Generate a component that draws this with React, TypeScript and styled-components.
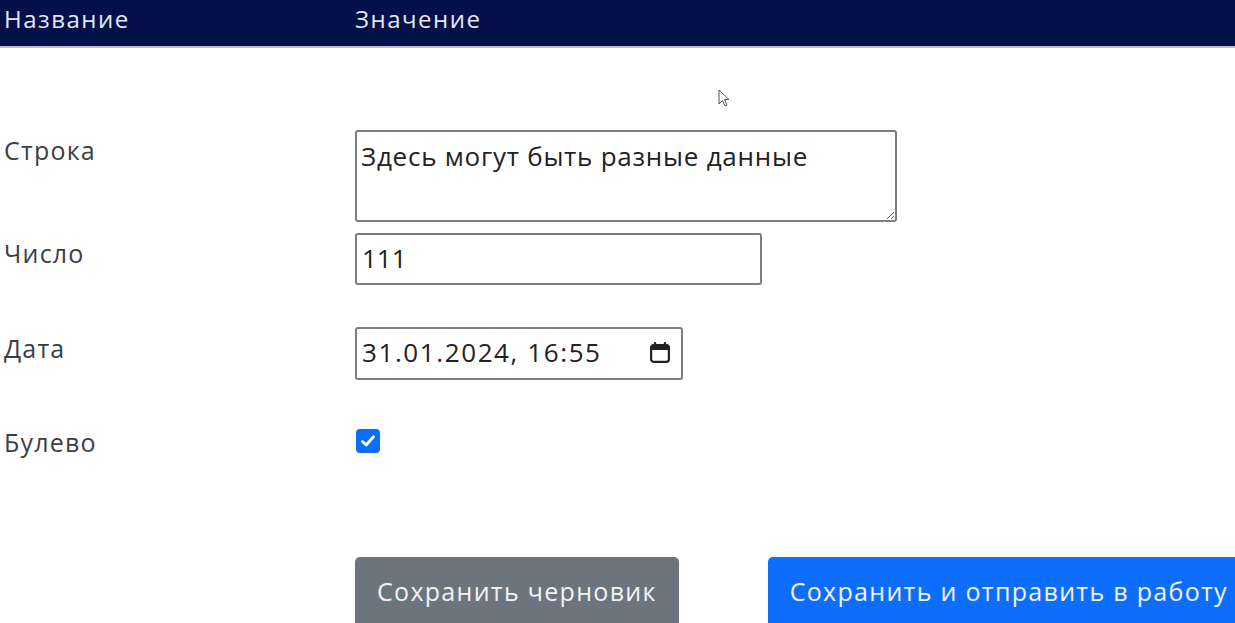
import React from "react";
import styled, { createGlobalStyle } from "styled-components";

const Global = createGlobalStyle`
  html, body { margin: 0; padding: 0; background: #ffffff; }
  body { font-family: "Open Sans", "Noto Sans", sans-serif; color: #212529; overflow: hidden; }
`;

const Page = styled.div`
  width: 1235px;
  height: 623px;
  overflow: hidden;
  position: relative;
`;

const Header = styled.div`
  display: grid;
  grid-template-columns: 355px 1fr;
  height: 48px;
  align-items: center;
  background: #03104a;
  border-bottom: 2px solid #b8bccb;
  box-sizing: border-box;
  color: #e3e7f2;
  font-size: 24px;
  letter-spacing: 1.5px;
  padding-bottom: 9px;
`;

const HeaderCell = styled.div<{ $pl?: number }>`
  padding-left: ${(p) => p.$pl ?? 0}px;
`;

const Row = styled.div<{ $mt: number; $lt: number }>`
  display: grid;
  grid-template-columns: 355px 1fr;
  align-items: start;
  margin-top: ${(p) => p.$mt}px;
  & > label {
    padding-top: ${(p) => p.$lt}px;
  }
`;

const Label = styled.label`
  font-size: 25px;
  line-height: 28px;
  letter-spacing: 1.2px;
  color: #3b3f45;
  padding-left: 4px;
`;

const TextArea = styled.textarea`
  width: 542px;
  height: 92px;
  box-sizing: border-box;
  border: 2px solid #7d7d7d;
  border-radius: 3px;
  padding: 6px 4px;
  font-family: "Open Sans", "Noto Sans", sans-serif;
  font-size: 26px;
  line-height: 36px;
  letter-spacing: 0.75px;
  color: #222;
  resize: vertical;
  display: block;
`;

const Input = styled.input<{ $w: number }>`
  width: ${(p) => p.$w}px;
  height: 52px;
  box-sizing: border-box;
  border: 2px solid #7d7d7d;
  border-radius: 3px;
  padding: 0 5px 2px;
  font-family: "Open Sans", "Noto Sans", sans-serif;
  font-size: 26px;
  color: #222;
  display: block;
`;

const DateBox = styled.div`
  width: 328px;
  height: 53px;
  box-sizing: border-box;
  border: 2px solid #7d7d7d;
  border-radius: 3px;
  padding: 0 10px 3px 5px;
  display: flex;
  align-items: center;
  justify-content: space-between;
  font-size: 26px;
  letter-spacing: 1.6px;
  color: #222;
`;

const Check = styled.span`
  display: inline-flex;
  align-items: center;
  justify-content: center;
  width: 24px;
  height: 24px;
  margin-left: 1px;
  margin-top: 2px;
  border-radius: 4px;
  background: #0b6ef6;
`;

const Buttons = styled.div`
  display: flex;
  gap: 89px;
  padding-left: 355px;
  margin-top: 101px;
`;

const Button = styled.button<{ $variant: "secondary" | "primary" }>`
  height: 70px;
  padding: 0 22px 2px;
  border: none;
  border-radius: 5px;
  font-family: "Open Sans", "Noto Sans", sans-serif;
  font-size: 25px;
  letter-spacing: 1.3px;
  color: #f1f3f5;
  white-space: nowrap;
  background: ${(p) => (p.$variant === "primary" ? "#0d6efd" : "#6c757d")};
`;

const Cursor = styled.svg`
  position: absolute;
  left: 718px;
  top: 89px;
`;

export default function App() {
  return (
    <Page>
      <Global />
      <Header>
        <HeaderCell $pl={4}>Название</HeaderCell>
        <HeaderCell>Значение</HeaderCell>
      </Header>
      <Row $mt={82} $lt={6}>
        <Label>Строка</Label>
        <TextArea defaultValue="Здесь могут быть разные данные" />
      </Row>
      <Row $mt={11} $lt={6}>
        <Label>Число</Label>
        <Input $w={407} type="text" defaultValue="111" />
      </Row>
      <Row $mt={42} $lt={7}>
        <Label>Дата</Label>
        <DateBox>
          <span>31.01.2024, 16:55</span>
          <svg width="22" height="24" viewBox="0 0 22 24">
            <rect x="2.1" y="5" width="17.8" height="16.8" rx="2.5" fill="none" stroke="#222" strokeWidth="2.2" />
            <rect x="2" y="5" width="18" height="5" rx="1.5" fill="#222" />
            <rect x="4.8" y="2" width="2.4" height="5" rx="1" fill="#222" />
            <rect x="14.8" y="2" width="2.4" height="5" rx="1" fill="#222" />
          </svg>
        </DateBox>
      </Row>
      <Row $mt={47} $lt={1}>
        <Label>Булево</Label>
        <div>
          <Check>
            <svg width="18" height="18" viewBox="0 0 18 18">
              <path d="M3.5 9.5 L7.2 13 L14.5 4.8" fill="none" stroke="#fff" strokeWidth="2.8" strokeLinecap="round" strokeLinejoin="round" />
            </svg>
          </Check>
        </div>
      </Row>
      <Buttons>
        <Button $variant="secondary">Сохранить черновик</Button>
        <Button $variant="primary">Сохранить и отправить в работу</Button>
      </Buttons>
      <Cursor width="14" height="20" viewBox="0 0 14 20">
        <path d="M1 1 L1 15 L4.5 11.5 L7 17 L9 16 L6.5 10.5 L11 10.5 Z" fill="#fff" stroke="#555" strokeWidth="1" />
      </Cursor>
    </Page>
  );
}
